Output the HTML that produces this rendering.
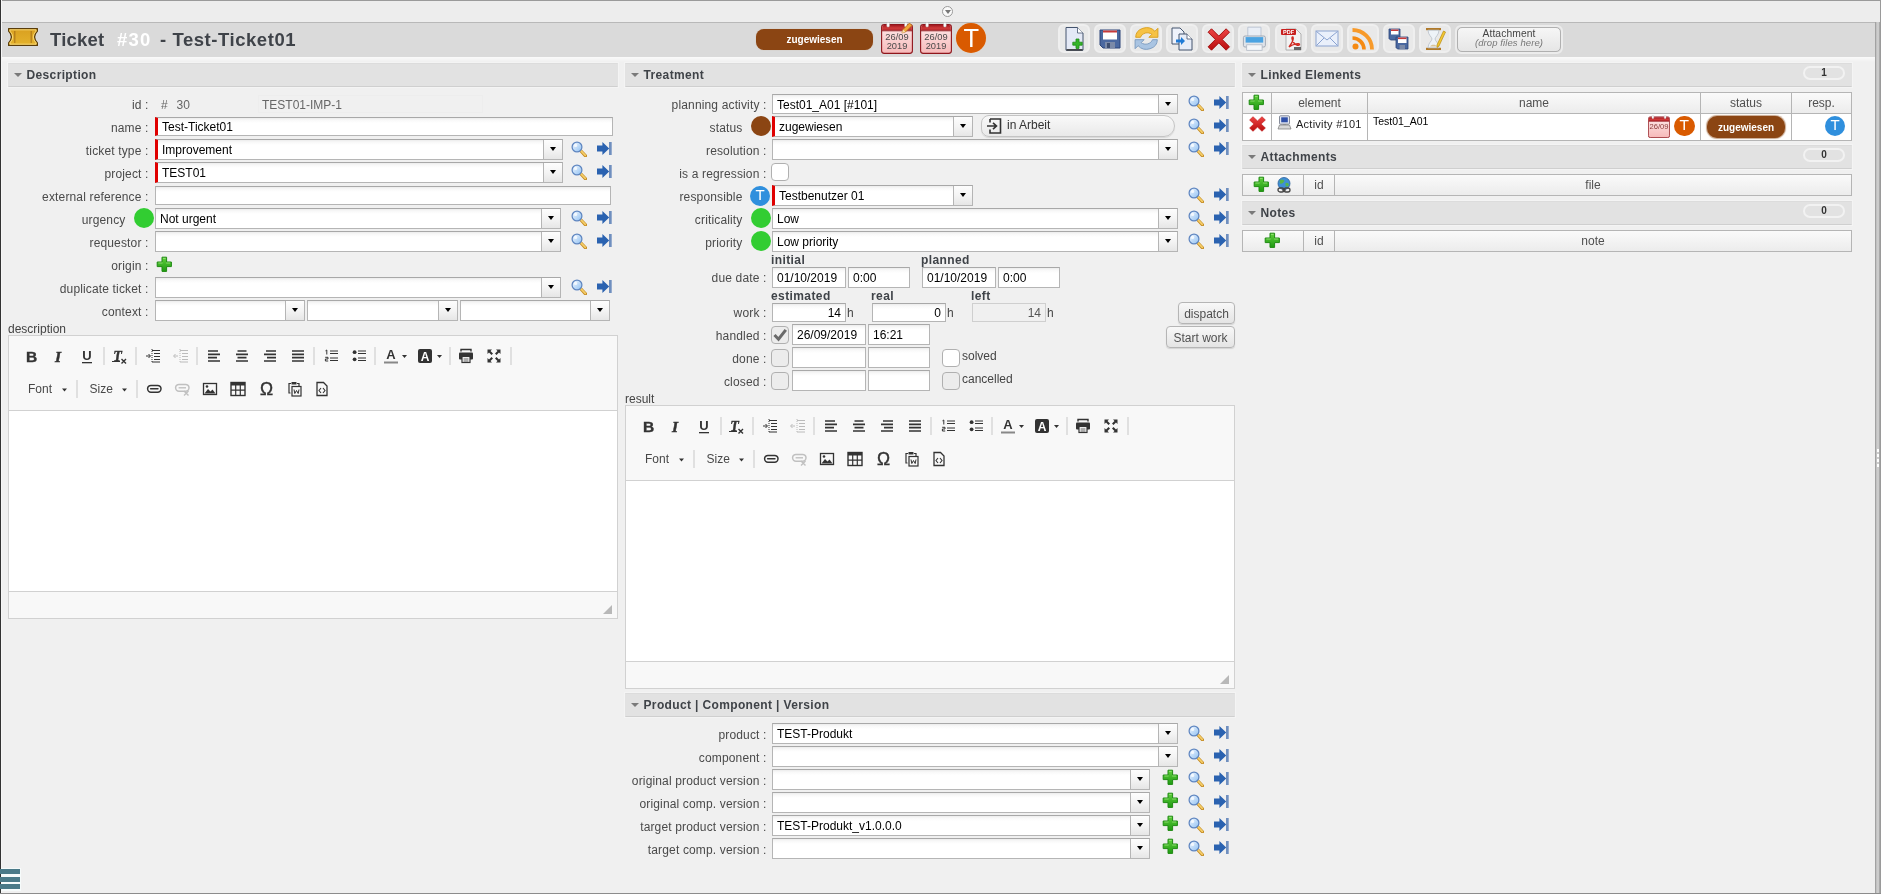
<!DOCTYPE html><html><head><meta charset="utf-8"><title>Ticket #30</title><style>
*{box-sizing:border-box;margin:0;padding:0}
html,body{width:1881px;height:894px;overflow:hidden}
body{will-change:transform;background:#f0f0f0;font-family:"Liberation Sans",sans-serif;font-size:12px;color:#000;position:relative}
.a{position:absolute}
.topline{left:0;top:0;width:1881px;height:1px;background:#9a9a9a}
.topstrip{left:0;top:1px;width:1881px;height:21px;background:#ededed}
.leftline{left:0;top:0;width:1px;height:894px;background:#333;box-shadow:1px 0 0 #f6f6f6}
.botline{left:0;top:893px;width:1881px;height:1px;background:#8c8c8c}
.tbar{left:1px;top:22px;width:1874px;height:35px;background:#dadada;border-top:1px solid #b8b8b8}
.split{left:1875px;top:22px;width:6px;height:871px;background:linear-gradient(90deg,#a2a2a2 0,#a2a2a2 1px,#bcbcbc 1px,#d2d2d2 3px,#c6c6c6 4px,#aaa 4px,#aaa 5px,#969696 5px)}
.rightline{left:1880px;top:0;width:1px;height:894px;background:#9a9a9a}
.sec{height:24px;background:#e2e2e2;border:1px solid #dcdcdc;border-bottom-color:#cfcfcf;border-left-color:#e2e2e2;border-right-color:#e2e2e2;box-shadow:0 0 0 1px #f4f4f4;color:#3f4348;font-weight:bold;font-size:12px;line-height:23px;padding-left:17.5px;letter-spacing:.36px}
.sec:before{content:"";position:absolute;left:4.5px;top:9px;border-left:4px solid transparent;border-right:4px solid transparent;border-top:4.5px solid #7a7a7a}
.lbl{color:#4a4a4a;letter-spacing:.15px;text-align:right;white-space:nowrap;height:16px;line-height:16px}
.in{background:#fff;border:1px solid #b5b5b5;border-top-color:#a8a8a8;background-image:linear-gradient(#ececec 0,#f8f8f8 2px,#fff 5px);white-space:nowrap;overflow:hidden;padding-left:4px;line-height:17px;font-size:12px}
.req{border-left:3px solid #e00000}
.sel{}
.arr{position:absolute;right:0;top:0;bottom:0;width:19px;border-left:1px solid #b5b5b5;background:linear-gradient(#fdfdfd 0,#f4f4f4 50%,#e6e6e6 100%)}
.arr:after{content:"";position:absolute;left:5.5px;top:7.4px;border-left:3.6px solid transparent;border-right:3.6px solid transparent;border-top:4.2px solid #000}
.ro{background:#f0f0f0;background-image:none;border:1px solid #cfcfcf;color:#555}
.dot{border-radius:50%}
.bold{font-weight:bold;color:#3f4348;letter-spacing:.4px}
.cb{width:18px;height:18px;border:1px solid #b0b0b0;border-radius:4px;background:#fff}
.cbg{background:#ececec}
.btn{border:1px solid #b5b5b5;border-radius:4px;background:linear-gradient(#f8f8f8,#e4e4e4);color:#505050;text-align:center;box-shadow:0 1px 1px rgba(0,0,0,.12)}
.th{background:linear-gradient(#fafafa,#ececec);border:1px solid #b5b5b5;color:#505050;text-align:center}
.td{background:#fff;border:1px solid #b5b5b5}
.badge{width:42px;height:14px;border:2px solid #f2f2f2;border-radius:8px;color:#333;font-weight:bold;font-size:10px;line-height:9px;text-align:center}
.ed{background:#f8f8f8;border:1px solid #d1d1d1}
.edc{background:#fff;border-top:1px solid #d1d1d1;border-bottom:1px solid #d1d1d1}
.tbtn{width:32px;height:29px;border-radius:6px;background:#e9e9e9;border:2px solid #efefef}
svg{position:absolute;overflow:visible}
</style></head><body>
<svg width="0" height="0" style="left:0;top:0">
<defs>
<linearGradient id="gLens" x1="0" y1="0" x2="1" y2="1"><stop offset="0" stop-color="#f2f8ff"/><stop offset="1" stop-color="#8fc0f2"/></linearGradient>
<linearGradient id="gGreen" x1="0" y1="0" x2="0" y2="1"><stop offset="0" stop-color="#5fcf3c"/><stop offset="1" stop-color="#1f9a12"/></linearGradient>
<linearGradient id="gRed" x1="0" y1="0" x2="0" y2="1"><stop offset="0" stop-color="#ee4444"/><stop offset="1" stop-color="#b80d0d"/></linearGradient>
<linearGradient id="gCal" x1="0" y1="0" x2="0" y2="1"><stop offset="0" stop-color="#fdeaea"/><stop offset="1" stop-color="#f7b9b9"/></linearGradient>
<linearGradient id="gCalH" x1="0" y1="0" x2="0" y2="1"><stop offset="0" stop-color="#a3181f"/><stop offset=".55" stop-color="#cf3a3a"/><stop offset="1" stop-color="#b3242b"/></linearGradient>
<linearGradient id="gGold" x1="0" y1="0" x2="0" y2="1"><stop offset="0" stop-color="#d9a020"/><stop offset="1" stop-color="#e4b22c"/></linearGradient>
<symbol id="iSearch" viewBox="0 0 16 16"><path d="M9.5 9.5 L14.5 14.8" stroke="#c48a22" stroke-width="3.2" stroke-linecap="round"/><path d="M9.8 9.6 L14.3 14.4" stroke="#f6cf6a" stroke-width="1.6" stroke-linecap="round"/><circle cx="6" cy="6" r="4.9" fill="url(#gLens)" stroke="#5f86c0" stroke-width="1.25"/><circle cx="4.6" cy="4.4" r="1.6" fill="#fff" opacity=".75"/></symbol>
<symbol id="iGoto" viewBox="0 0 15 13"><path d="M0 3.4 H5.4 V0 L12.2 6.5 L5.4 13 V9.6 H0 Z" fill="#2a62b0"/><rect x="12" y="0" width="2.7" height="13" fill="#6f8fbf"/></symbol>
<symbol id="iPlus" viewBox="0 0 16 16"><path d="M6 1.2 H10.6 V6 H15.4 V10.6 H10.6 V15.4 H6 V10.6 H1.2 V6 H6 Z" fill="url(#gGreen)" stroke="#1f8a12" stroke-width="1"/><path d="M7 2.4 H9.6 M2.4 7 H6.5 M10.2 7 H14.2" stroke="#a8ea8a" stroke-width=".9" opacity=".8"/></symbol>
<symbol id="iX" viewBox="0 0 17 16"><path d="M.6 4 L4 .7 L8.5 4.9 L13 .7 L16.4 4 L12.1 8 L16.4 12 L13 15.3 L8.5 11.1 L4 15.3 L.6 12 L4.9 8 Z" fill="url(#gRed)" stroke="#c01818" stroke-width=".6" stroke-linejoin="round"/></symbol>
<symbol id="iCal" viewBox="0 0 32 32"><rect x=".6" y="2.6" width="30.8" height="28.8" rx="2.6" fill="url(#gCal)" stroke="#8f161c" stroke-width="1.1"/><path d="M1.1 8.6 V5.4 Q1.1 3.1 3.4 3.1 H28.6 Q30.9 3.1 30.9 5.4 V8.6 Z" fill="url(#gCalH)"/><path d="M1 8.8 H31" stroke="#8f161c" stroke-width=".9"/><rect x="5.8" y=".5" width="2.6" height="4.4" rx=".8" fill="#fff" stroke="#b9b9b9" stroke-width=".5"/><rect x="23.6" y=".5" width="2.6" height="4.4" rx=".8" fill="#fff" stroke="#b9b9b9" stroke-width=".5"/></symbol>
</defs></svg>
<div class="a topstrip"></div><div class="a topline"></div>
<div class="a tbar"></div><div class="a" style="left:1px;top:57px;width:1874px;height:5px;background:linear-gradient(#fafafa,#f0f0f0)"></div>
<div class="a split"></div><div class="a" style="left:1877px;top:449px;width:2px;height:20px;background:repeating-linear-gradient(#fff 0,#fff 3px,transparent 3px,transparent 5px)"></div>
<div class="a rightline"></div><div class="a leftline"></div><div class="a botline"></div>
<div class="a" style="left:1px;top:868px;width:20px;height:23px;background:#f6fbfb"></div>
<div class="a" style="left:0;top:869px;width:20px;height:5px;background:#4b7a88"></div>
<div class="a" style="left:0;top:877px;width:20px;height:5px;background:#4b7a88"></div>
<div class="a" style="left:0;top:884px;width:20px;height:5px;background:#4b7a88"></div>
<div class="a dot" style="left:942px;top:5.5px;width:11px;height:11px;border:1px solid #9a9a9a;background:#fafafa"></div><div class="a" style="left:944.5px;top:9.5px;border-left:3px solid transparent;border-right:3px solid transparent;border-top:4px solid #777"></div>
<svg class="a" style="left:8px;top:28px" width="30" height="18" viewBox="0 0 30 18"><path d="M.6 .6 H29.4 V3.2 Q23.8 9 29.4 14.8 V17.4 H.6 V14.8 Q6.2 9 .6 3.2 Z" fill="url(#gGold)" stroke="#5a3d0a" stroke-width="1.2" stroke-linejoin="round"/><path d="M1.8 1.8 H28 V3.2 Q22.6 9 28 14.8 V16.2 H2 V14.8 Q7.4 9 2 3.2 Z" fill="none" stroke="#ffe28a" stroke-width=".9" opacity=".9"/><path d="M6.8 3.4 V15 M23.2 3.4 V15" stroke="#7a4208" stroke-width="1.1" stroke-dasharray="1 1"/></svg>
<div class="a" style="left:50px;top:29px;font-size:18.5px;letter-spacing:.2px;font-weight:bold;color:#3f4349;line-height:22px;white-space:nowrap">Ticket</div>
<div class="a" style="left:117px;top:29px;font-size:18.5px;letter-spacing:1.2px;font-weight:bold;color:#fff;line-height:22px;white-space:nowrap">#30</div>
<div class="a" style="left:160px;top:29px;font-size:18.5px;font-weight:bold;color:#3f4349;line-height:22px;white-space:nowrap;letter-spacing:.55px">- Test-Ticket01</div>
<div class="a" style="left:756px;top:29px;width:117px;height:21px;border-radius:8px;background:#8b4513;color:#fff;font-weight:bold;font-size:10px;line-height:21px;text-align:center;box-shadow:0 0 1px #c9a88f">zugewiesen</div>
<svg class="a" style="left:881px;top:22px" width="32" height="32"><use href="#iCal"/></svg>
<div class="a" style="left:881px;top:32.5px;width:32px;text-align:center;font-size:9.3px;line-height:9.6px;color:#4a4a4a">26/09<br>2019</div>
<svg class="a" style="left:901px;top:22px" width="12" height="12" viewBox="0 0 12 12"><path d="M1 11 L2 7.5 L8.5 1 L11 3.5 L4.5 10 Z" fill="#f0a63a" stroke="#b36b12" stroke-width=".7"/><path d="M1 11 L2 7.5 L4.5 10 Z" fill="#f5deb3"/></svg>
<svg class="a" style="left:920px;top:22px" width="32" height="32"><use href="#iCal"/></svg>
<div class="a" style="left:920px;top:32.5px;width:32px;text-align:center;font-size:9.3px;line-height:9.6px;color:#4a4a4a">26/09<br>2019</div>
<div class="a dot" style="left:956px;top:22.5px;width:30.4px;height:30.4px;background:#d95a00;color:#fff;font-size:25.5px;line-height:31px;box-shadow:0 0 1px #f0c8a0;text-align:center">T</div>
<div class="a tbtn" style="left:1058px;top:24px"></div>
<div class="a tbtn" style="left:1094px;top:24px"></div>
<div class="a tbtn" style="left:1130px;top:24px"></div>
<div class="a tbtn" style="left:1166px;top:24px"></div>
<div class="a tbtn" style="left:1202px;top:24px"></div>
<div class="a tbtn" style="left:1238px;top:24px"></div>
<div class="a tbtn" style="left:1275px;top:24px"></div>
<div class="a tbtn" style="left:1311px;top:24px"></div>
<div class="a tbtn" style="left:1347px;top:24px"></div>
<div class="a tbtn" style="left:1383px;top:24px"></div>
<div class="a tbtn" style="left:1419px;top:24px"></div>
<svg class="a" style="left:1062px;top:27px" width="24" height="24" viewBox="0 0 24 24"><g transform="translate(12 12) scale(1.0) translate(-12 -12)"><path d="M4 .5 H15.5 L21 6 V23.2 H4 Z" fill="#e4e9f6" stroke="#44546e" stroke-width="1"/><path d="M15.5 .5 V6 H21" fill="#fff" stroke="#44546e" stroke-width=".8"/><path d="M4.5 22.9 H20.6" stroke="#222" stroke-width="1.3"/><path d="M14 12 H17 V15.2 H20.2 V18.2 H17 V21.4 H14 V18.2 H10.8 V15.2 H14 Z" fill="#35b52a" stroke="#1f8a18" stroke-width=".8"/></g></svg>
<svg class="a" style="left:1098px;top:27px" width="24" height="24" viewBox="0 0 24 24"><g transform="translate(12 12) scale(1.0) translate(-12 -12)"><path d="M2 3 H22 V21 H5 L2 18 Z" fill="#4a68a0" stroke="#2c4478" stroke-width="1"/><rect x="5" y="3.5" width="14" height="9" fill="#fff"/><rect x="5" y="3.5" width="14" height="2" fill="#c73a3a"/><rect x="7" y="15" width="10" height="6" fill="#7b8aa8"/><rect x="9" y="16" width="3" height="5" fill="#3c4d70"/></g></svg>
<svg class="a" style="left:1134px;top:27px" width="24" height="24" viewBox="0 0 24 24"><g transform="translate(12.5 11.5) scale(1.2) translate(-12 -12)"><path d="M3 11 A9 8 0 0 1 19 6 L21.5 3.5 V11 H14 L16.5 8.5 A6 5.5 0 0 0 7 11 Z" fill="#f6c244" stroke="#d9a020" stroke-width=".8"/><path d="M21 13 A9 8 0 0 1 5 18 L2.5 20.5 V13 H10 L7.5 15.5 A6 5.5 0 0 0 17 13 Z" fill="#a9c4e2" stroke="#7c9cc0" stroke-width=".8"/></g></svg>
<svg class="a" style="left:1170px;top:27px" width="24" height="24" viewBox="0 0 24 24"><g transform="translate(12 12) scale(1.0) translate(-12 -12)"><path d="M2 1 H10 L14 5 V17 H2 Z" fill="#eef2fb" stroke="#44546e" stroke-width="1"/><path d="M9 7 H17 L22 12 V23 H9 Z" fill="#e6ecf8" stroke="#44546e" stroke-width="1"/><path d="M17 7 V12 H22" fill="#fff" stroke="#44546e" stroke-width=".8"/><path d="M6 12.5 H11 V10 L15 14 L11 18 V15.5 H6 Z" fill="#1f7ad6"/></g></svg>
<svg class="a" style="left:1206px;top:27px" width="24" height="24" viewBox="0 0 24 24"><g transform="translate(12.8 12.5) scale(1.14) translate(-12 -12)"><path d="M2.6 5.6 L5.6 2.6 L12 9 L18.4 2.6 L21.4 5.6 L15 12 L21.4 18.4 L18.4 21.4 L12 15 L5.6 21.4 L2.6 18.4 L9 12 Z" fill="url(#gRed)" stroke="#9e0a0a" stroke-width=".8" stroke-linejoin="round"/></g></svg>
<svg class="a" style="left:1242px;top:27px" width="24" height="24" viewBox="0 0 24 24"><g transform="translate(12.4 12.3) scale(1.1) translate(-12 -12)"><path d="M6 1 H18 V10 H6 Z" fill="#e9eef6" stroke="#b8c2d2" stroke-width=".8"/><rect x="2" y="9" width="20" height="10" rx="1.5" fill="#dfe4ea" stroke="#9aa3b0" stroke-width=".8"/><rect x="4" y="10" width="16" height="5" fill="#4ba3e2"/><rect x="5" y="17" width="14" height="5" fill="#f4f6f9" stroke="#b0b8c4" stroke-width=".7"/></g></svg>
<svg class="a" style="left:1279px;top:27px" width="24" height="24" viewBox="0 0 24 24"><g transform="translate(12 12) scale(1.0) translate(-12 -12)"><path d="M7 2 H17 L22 7 V23 H7 Z" fill="#f2f2f2" stroke="#a8a8a8" stroke-width=".9"/><rect x="2" y="2" width="15" height="6" rx="1" fill="#c8201e"/><text x="9.5" y="7" font-size="5.5" font-weight="bold" fill="#fff" text-anchor="middle" font-family="Liberation Sans">PDF</text><path d="M10 20 C13 16 15 12 14 10 C12.5 9 12.5 13 15 16 C17 18.5 20 19 20.5 17.5 C20.5 16 15 16.5 10 20 Z" fill="none" stroke="#d12a22" stroke-width="1.4"/><rect x="15" y="20" width="7" height="3" fill="#666"/></g></svg>
<svg class="a" style="left:1315px;top:27px" width="24" height="24" viewBox="0 0 24 24"><g transform="translate(12 12) scale(1.0) translate(-12 -12)"><rect x="1" y="4" width="22" height="15" fill="#eaf0fb" stroke="#8ba3d0" stroke-width="1"/><path d="M1.5 4.5 L12 13 L22.5 4.5 M1.5 18.5 L9 11 M22.5 18.5 L15 11" fill="none" stroke="#8ba3d0" stroke-width="1"/></g></svg>
<svg class="a" style="left:1351px;top:27px" width="24" height="24" viewBox="0 0 24 24"><g transform="translate(12 12) scale(1.0) translate(-12 -12)"><circle cx="4.5" cy="19.5" r="3" fill="#f58a12"/><path d="M1.5 11 A11.5 11.5 0 0 1 13 22.5" fill="none" stroke="#f58a12" stroke-width="3.6"/><path d="M1.5 3 A19.5 19.5 0 0 1 21 22.5" fill="none" stroke="#f79a2a" stroke-width="3.8"/></g></svg>
<svg class="a" style="left:1387px;top:27px" width="24" height="24" viewBox="0 0 24 24"><g transform="translate(12 12) scale(1.0) translate(-12 -12)"><g><path d="M2 2 H13 V13 H3.5 L2 11.5 Z" fill="#4a68a0" stroke="#2c4478" stroke-width=".8"/><rect x="4" y="2.5" width="7.5" height="5" fill="#fff"/><rect x="4" y="2.5" width="7.5" height="1.5" fill="#c73a3a"/></g><g transform="translate(7,8)"><path d="M2 2 H14 V14 H3.5 L2 12.5 Z" fill="#4a68a0" stroke="#2c4478" stroke-width=".8"/><rect x="4" y="2.5" width="8.5" height="5.5" fill="#fff"/><rect x="4" y="2.5" width="8.5" height="1.6" fill="#c73a3a"/><rect x="5.5" y="10" width="5.5" height="4" fill="#7b8aa8"/></g></g></svg>
<svg class="a" style="left:1423px;top:27px" width="24" height="24" viewBox="0 0 24 24"><g transform="translate(12 12) scale(1.0) translate(-12 -12)"><rect x="3" y="1" width="15" height="2.2" fill="#b07a2a"/><rect x="3" y="20.8" width="15" height="2.2" fill="#b07a2a"/><path d="M5 3.2 H16 C16 8 12 10 12 12 C12 14 16 16 16 20.8 H5 C5 16 9 14 9 12 C9 10 5 8 5 3.2 Z" fill="#eef3f8" stroke="#b8bfc8" stroke-width=".8"/><path d="M7 19.5 C8 17 13 17 14 19.5 Z" fill="#d8c49a"/><path d="M14 18 L20.5 4 L22.5 5 L16 19 L14 20.5 Z" fill="#f3c832" stroke="#b88a10" stroke-width=".7"/></g></svg>
<div class="a" style="left:1455px;top:25px;width:108px;height:29px;border-radius:6px;border:2px solid #ececec"></div>
<div class="a" style="left:1457px;top:27px;width:104px;height:25px;border-radius:5px;border:1px solid #b0b0b0;background:linear-gradient(#f6f6f6,#e6e6e6);text-align:center;font-size:10.3px;line-height:8.9px;color:#444;padding-top:2.4px;letter-spacing:.1px">Attachment<br><i style="color:#777;font-size:9.5px">(drop files here)</i></div>
<div class="a sec" style="left:8px;top:63px;width:610px">Description</div>
<div class="a lbl" style="left:-51.5px;top:97px;width:200px">id :</div>
<div class="a" style="left:161px;top:97px;line-height:16px;color:#666">#</div><div class="a" style="left:176.5px;top:97px;line-height:16px;color:#666">30</div>
<div class="a" style="left:258px;top:95px;width:225px;height:18px;border:1px solid #ededed;color:#666;line-height:18px;padding-left:3px">TEST01-IMP-1</div>
<div class="a lbl" style="left:-51.5px;top:120px;width:200px">name :</div>
<div class="a in req" style="left:155px;top:117px;width:458px;height:19px;line-height:19px">Test-Ticket01</div>
<div class="a lbl" style="left:-51.5px;top:143px;width:200px">ticket type :</div>
<div class="a in req" style="left:155px;top:139px;width:408px;height:21px;line-height:21px">Improvement<span class="arr" style="width:19px"></span></div>
<svg class="a" style="left:571px;top:141px" width="16" height="16"><use href="#iSearch"/></svg>
<svg class="a" style="left:597px;top:142px" width="15" height="13"><use href="#iGoto"/></svg>
<div class="a lbl" style="left:-51.5px;top:166px;width:200px">project :</div>
<div class="a in req" style="left:155px;top:162px;width:408px;height:21px;line-height:21px">TEST01<span class="arr" style="width:19px"></span></div>
<svg class="a" style="left:571px;top:164px" width="16" height="16"><use href="#iSearch"/></svg>
<svg class="a" style="left:597px;top:165px" width="15" height="13"><use href="#iGoto"/></svg>
<div class="a lbl" style="left:-51.5px;top:189px;width:200px">external reference :</div>
<div class="a in" style="left:155px;top:186px;width:456px;height:19px;line-height:19px"></div>
<div class="a lbl" style="left:-74.5px;top:212px;width:200px">urgency</div>
<div class="a dot" style="left:134px;top:208px;width:20px;height:20px;background:#32cd32"></div>
<div class="a in" style="left:155px;top:208px;width:406px;height:21px;line-height:21px">Not urgent<span class="arr" style="width:19px"></span></div>
<svg class="a" style="left:571px;top:210px" width="16" height="16"><use href="#iSearch"/></svg>
<svg class="a" style="left:597px;top:211px" width="15" height="13"><use href="#iGoto"/></svg>
<div class="a lbl" style="left:-51.5px;top:235px;width:200px">requestor :</div>
<div class="a in" style="left:155px;top:231px;width:406px;height:21px;line-height:21px"><span class="arr" style="width:19px"></span></div>
<svg class="a" style="left:571px;top:233px" width="16" height="16"><use href="#iSearch"/></svg>
<svg class="a" style="left:597px;top:234px" width="15" height="13"><use href="#iGoto"/></svg>
<div class="a lbl" style="left:-51.5px;top:258px;width:200px">origin :</div>
<svg class="a" style="left:156px;top:256px" width="16" height="16"><use href="#iPlus"/></svg>
<div class="a lbl" style="left:-51.5px;top:281px;width:200px">duplicate ticket :</div>
<div class="a in" style="left:155px;top:277px;width:406px;height:21px;line-height:21px"><span class="arr" style="width:19px"></span></div>
<svg class="a" style="left:571px;top:279px" width="16" height="16"><use href="#iSearch"/></svg>
<svg class="a" style="left:597px;top:280px" width="15" height="13"><use href="#iGoto"/></svg>
<div class="a lbl" style="left:-51.5px;top:304px;width:200px">context :</div>
<div class="a in" style="left:155px;top:300px;width:150px;height:21px;line-height:21px"><span class="arr" style="width:19px"></span></div>
<div class="a in" style="left:307px;top:300px;width:151px;height:21px;line-height:21px"><span class="arr" style="width:19px"></span></div>
<div class="a in" style="left:460px;top:300px;width:150px;height:21px;line-height:21px"><span class="arr" style="width:19px"></span></div>
<div class="a" style="left:8px;top:321px;line-height:16px;color:#444">description</div>
<div class="a ed" style="left:8px;top:335px;width:610px;height:284px"></div>
<div class="a edc" style="left:9px;top:410px;width:608px;height:182px"></div>
<svg class="a" style="left:0;top:0" width="1881" height="894"><text x="31.5" y="361.6" font-size="15.5" font-weight="bold" text-anchor="middle" fill="#333" stroke="#333" stroke-width=".4" font-family="Liberation Sans">B</text><text x="58" y="361.6" font-size="15.5" font-style="italic" font-weight="bold" text-anchor="middle" fill="#333" stroke="#333" stroke-width=".5" font-family="Liberation Serif">I</text><text x="87" y="360" font-size="13" font-weight="bold" text-anchor="middle" fill="#333" font-family="Liberation Sans">U</text><rect x="82" y="362" width="10" height="1.3" fill="#333"/><text x="117.5" y="360.5" font-size="14" font-style="italic" font-weight="bold" text-anchor="middle" fill="#333" font-family="Liberation Serif" stroke="#333" stroke-width=".4">T</text><rect x="112" y="361" width="8" height="1" fill="#333"/><path d="M121.5 359 l4.5 4.5 m0 -4.5 l-4.5 4.5" stroke="#333" stroke-width="1.4"/><rect x="103.5" y="347" width="1" height="18" fill="#c8c8c8"/><rect x="135.5" y="347" width="1" height="18" fill="#c8c8c8"/><rect x="196.5" y="347" width="1" height="18" fill="#c8c8c8"/><rect x="313.5" y="347" width="1" height="18" fill="#c8c8c8"/><rect x="374.5" y="347" width="1" height="18" fill="#c8c8c8"/><rect x="449.5" y="347" width="1" height="18" fill="#c8c8c8"/><rect x="510.5" y="347" width="1" height="18" fill="#c8c8c8"/><g transform="translate(145,348)" opacity="1"><path d="M7 2.5 H15 M9 5.5 H15 M9 8.5 H15 M9 11.5 H15 M7 14 H15" stroke="#333" stroke-width="1"/><path d="M7 1 V15" stroke="#333" stroke-width="1" stroke-dasharray="1 1"/><path d="M1 8 H5 M3.5 6 L5.5 8 L3.5 10" stroke="#333" stroke-width="1" fill="none"/></g><g transform="translate(173,348)" opacity="0.3"><path d="M7 2.5 H15 M9 5.5 H15 M9 8.5 H15 M9 11.5 H15 M7 14 H15" stroke="#333" stroke-width="1"/><path d="M7 1 V15" stroke="#333" stroke-width="1" stroke-dasharray="1 1"/><path d="M1 8 H5 M2.5 6 L.5 8 L2.5 10" stroke="#333" stroke-width="1" fill="none"/></g><g transform="translate(206,348)" opacity="1"><path d="M2 3 H12 M2 6.3 H14 M2 9.6 H11 M2 13 H14" stroke="#333" stroke-width="1.7"/></g><g transform="translate(234,348)" opacity="1"><path d="M3.5 3 H12.5 M2 6.3 H14 M3.5 9.6 H12.5 M2 13 H14" stroke="#333" stroke-width="1.7"/></g><g transform="translate(262,348)" opacity="1"><path d="M4 3 H14 M2 6.3 H14 M5 9.6 H14 M2 13 H14" stroke="#333" stroke-width="1.7"/></g><g transform="translate(290,348)" opacity="1"><path d="M2 3 H14 M2 6.3 H14 M2 9.6 H14 M2 13 H14" stroke="#333" stroke-width="1.7"/></g><g transform="translate(324,348)" opacity="1"><path d="M6 3 H14 M6 5.5 H14 M6 10 H14 M6 12.5 H14" stroke="#333" stroke-width="1"/><path d="M1.5 2.8 L2.8 2 V6.5 M1.2 9.3 H4 V11 H1.4 V13 H4.2" fill="none" stroke="#333" stroke-width="1"/></g><g transform="translate(352,348)" opacity="1"><path d="M6 3 H14 M6 5.5 H14 M6 10 H14 M6 12.5 H14" stroke="#333" stroke-width="1"/><circle cx="2.6" cy="4.2" r="1.9" fill="#333"/><circle cx="2.6" cy="11.3" r="1.9" fill="#333"/></g><text x="391" y="359" font-size="13" font-weight="bold" text-anchor="middle" fill="#333" font-family="Liberation Sans">A</text><rect x="384" y="361.5" width="14" height="2" fill="#888"/><path d="M402 355 h5 l-2.5 3 z" fill="#333"/><rect x="418" y="349" width="14" height="14" rx="2" fill="#333"/><text x="425" y="360.5" font-size="12" font-weight="bold" text-anchor="middle" fill="#fff" font-family="Liberation Sans">A</text><path d="M437 355 h5 l-2.5 3 z" fill="#333"/><g transform="translate(458,348)" opacity="1"><path d="M3 3.5 V1.5 H13 V3.5" fill="none" stroke="#333" stroke-width="1.4"/><rect x="1" y="4.5" width="14" height="7" rx="1" fill="#333"/><rect x="4" y="8.5" width="8" height="6" fill="#fff" stroke="#333" stroke-width="1.2"/><path d="M5.5 11 H10.5 M5.5 13 H10.5" stroke="#333" stroke-width=".8"/></g><g transform="translate(486,348)" opacity="1"><path d="M1.5 1.5 H6 L4.5 3 L7 5.5 L5.5 7 L3 4.5 L1.5 6 Z M14.5 1.5 V6 L13 4.5 L10.5 7 L9 5.5 L11.5 3 L10 1.5 Z M1.5 14.5 V10 L3 11.5 L5.5 9 L7 10.5 L4.5 13 L6 14.5 Z M14.5 14.5 H10 L11.5 13 L9 10.5 L10.5 9 L13 11.5 L14.5 10 Z" fill="#333"/></g><text x="28" y="393.2" font-size="12" fill="#484848" font-family="Liberation Sans">Font</text><path d="M62 388.5 h5 l-2.5 3 z" fill="#333"/><text x="89.5" y="393.2" font-size="12" fill="#484848" font-family="Liberation Sans">Size</text><path d="M122 388.5 h5 l-2.5 3 z" fill="#333"/><rect x="76.5" y="380" width="1" height="18" fill="#c8c8c8"/><rect x="136.5" y="380" width="1" height="18" fill="#c8c8c8"/><g transform="translate(146,381)" opacity="1"><rect x="1.6" y="4.4" width="13.4" height="6.8" rx="3.4" fill="none" stroke="#333" stroke-width="1.5"/><path d="M4.6 7.8 H12" stroke="#333" stroke-width="1.4" stroke-linecap="round"/></g><g transform="translate(174,381)" opacity="0.28"><rect x="1.6" y="3.4" width="13.4" height="6.8" rx="3.4" fill="none" stroke="#333" stroke-width="1.5"/><path d="M4.6 6.8 H12" stroke="#333" stroke-width="1.4"/><path d="M10 10 l4.5 4.5 m0 -4.5 l-4.5 4.5" stroke="#333" stroke-width="1.4"/></g><g transform="translate(202,381)" opacity="1"><rect x="1.5" y="2.5" width="13" height="11" fill="none" stroke="#333" stroke-width="1.3"/><path d="M2.5 12.5 L6 8 L8.5 10.5 L10.5 8.5 L13.5 12.5 Z" fill="#333"/><circle cx="5" cy="5.5" r="1.3" fill="#333"/></g><g transform="translate(230,381)" opacity="1"><rect x="1" y="1.5" width="14" height="13" fill="none" stroke="#333" stroke-width="1.4"/><rect x="1" y="1.5" width="14" height="3" fill="#333"/><path d="M1 9.2 H15 M5.7 4 V14.5 M10.3 4 V14.5" stroke="#333" stroke-width="1.2"/></g><text x="266.5" y="395" font-size="17.5" text-anchor="middle" fill="#333" stroke="#333" stroke-width=".45" font-family="Liberation Sans">Ω</text><g transform="translate(287,381)" opacity="1"><path d="M3.5 12 H2 V2.5 H4 M10 2.5 H12 V5" fill="none" stroke="#333" stroke-width="1.2"/><rect x="4.5" y="1" width="5" height="2.6" rx=".6" fill="#333"/><rect x="5" y="5.5" width="9" height="9.5" fill="none" stroke="#333" stroke-width="1.2"/><path d="M7 8.5 L7.8 12.5 L9.5 9.5 L11.2 12.5 L12 8.5" fill="none" stroke="#333" stroke-width="1"/></g><g transform="translate(314,381)" opacity="1"><path d="M3 1.5 H9.5 L13 5 V14.5 H3 Z" fill="none" stroke="#333" stroke-width="1.3"/><path d="M7 7 L5 9.5 L7 12 M9 7 L11 9.5 L9 12" fill="none" stroke="#333" stroke-width="1.1"/></g><path d="M612 605 v9 h-9 z" fill="#b8b8b8"/></svg>
<div class="a sec" style="left:625px;top:63px;width:610px">Treatment</div>
<div class="a lbl" style="left:566.5px;top:97px;width:200px">planning activity :</div>
<div class="a in" style="left:772px;top:94px;width:406px;height:20px;line-height:20px">Test01_A01 [#101]<span class="arr" style="width:19px"></span></div>
<svg class="a" style="left:1188px;top:95px" width="16" height="16"><use href="#iSearch"/></svg>
<svg class="a" style="left:1214px;top:96px" width="15" height="13"><use href="#iGoto"/></svg>
<div class="a lbl" style="left:542.5px;top:120px;width:200px">status</div>
<div class="a dot" style="left:751px;top:116px;width:20px;height:20px;background:#8b4513"></div>
<div class="a in req" style="left:772px;top:116px;width:201px;height:21px;line-height:21px">zugewiesen<span class="arr" style="width:19px"></span></div>
<svg class="a" style="left:1188px;top:118px" width="16" height="16"><use href="#iSearch"/></svg>
<svg class="a" style="left:1214px;top:119px" width="15" height="13"><use href="#iGoto"/></svg>
<div class="a" style="left:981px;top:115px;width:194px;height:22px;border:1px solid #c4c4c4;border-radius:8px 11px 11px 8px;background:linear-gradient(#f9f9f9,#e9e9e9);box-shadow:0 1px 1px rgba(0,0,0,.1)"></div>
<svg class="a" style="left:986px;top:118px" width="16" height="16" viewBox="0 0 16 16"><path d="M4 1 H14.5 V15 H4 V11.5 M4 4.5 V1" fill="none" stroke="#333" stroke-width="1.6"/><path d="M1 8 H10 M7 4.8 L10.5 8 L7 11.2" fill="none" stroke="#333" stroke-width="1.6"/></svg>
<div class="a" style="left:1007px;top:117px;line-height:16px;color:#333">in Arbeit</div>
<div class="a lbl" style="left:566.5px;top:143px;width:200px">resolution :</div>
<div class="a in" style="left:772px;top:139px;width:406px;height:21px;line-height:21px"><span class="arr" style="width:19px"></span></div>
<svg class="a" style="left:1188px;top:141px" width="16" height="16"><use href="#iSearch"/></svg>
<svg class="a" style="left:1214px;top:142px" width="15" height="13"><use href="#iGoto"/></svg>
<div class="a lbl" style="left:566.5px;top:166px;width:200px">is a regression :</div>
<div class="a cb" style="left:771px;top:163px"></div>
<div class="a lbl" style="left:542.5px;top:189px;width:200px">responsible</div>
<div class="a dot" style="left:750px;top:186px;width:20px;height:20px;background:#2f8fdd;color:#fff;font-size:15px;line-height:18.6px;text-align:center">T</div>
<div class="a in req" style="left:772px;top:185px;width:201px;height:21px;line-height:21px">Testbenutzer 01<span class="arr" style="width:19px"></span></div>
<svg class="a" style="left:1188px;top:187px" width="16" height="16"><use href="#iSearch"/></svg>
<svg class="a" style="left:1214px;top:188px" width="15" height="13"><use href="#iGoto"/></svg>
<div class="a lbl" style="left:542.5px;top:212px;width:200px">criticality</div>
<div class="a dot" style="left:751px;top:208px;width:20px;height:20px;background:#32cd32"></div>
<div class="a in" style="left:772px;top:208px;width:406px;height:21px;line-height:21px">Low<span class="arr" style="width:19px"></span></div>
<svg class="a" style="left:1188px;top:210px" width="16" height="16"><use href="#iSearch"/></svg>
<svg class="a" style="left:1214px;top:211px" width="15" height="13"><use href="#iGoto"/></svg>
<div class="a lbl" style="left:542.5px;top:235px;width:200px">priority</div>
<div class="a dot" style="left:751px;top:231px;width:20px;height:20px;background:#32cd32"></div>
<div class="a in" style="left:772px;top:231px;width:406px;height:21px;line-height:21px">Low priority<span class="arr" style="width:19px"></span></div>
<svg class="a" style="left:1188px;top:233px" width="16" height="16"><use href="#iSearch"/></svg>
<svg class="a" style="left:1214px;top:234px" width="15" height="13"><use href="#iGoto"/></svg>
<div class="a bold" style="left:771px;top:252px;line-height:16px">initial</div>
<div class="a bold" style="left:921px;top:252px;line-height:16px">planned</div>
<div class="a lbl" style="left:566.5px;top:270px;width:200px">due date :</div>
<div class="a in" style="left:772px;top:267px;width:74px;height:21px;line-height:21px">01/10/2019</div>
<div class="a in" style="left:848px;top:267px;width:62px;height:21px;line-height:21px">0:00</div>
<div class="a in" style="left:922px;top:267px;width:74px;height:21px;line-height:21px">01/10/2019</div>
<div class="a in" style="left:998px;top:267px;width:62px;height:21px;line-height:21px">0:00</div>
<div class="a bold" style="left:771px;top:288px;line-height:16px">estimated</div>
<div class="a bold" style="left:871px;top:288px;line-height:16px">real</div>
<div class="a bold" style="left:971px;top:288px;line-height:16px">left</div>
<div class="a lbl" style="left:566.5px;top:305px;width:200px">work :</div>
<div class="a in" style="left:772px;top:303px;width:74px;height:19px;line-height:19px;text-align:right;padding-right:4px">14</div>
<div class="a in" style="left:872px;top:303px;width:74px;height:19px;line-height:19px;text-align:right;padding-right:4px">0</div>
<div class="a in ro" style="left:972px;top:303px;width:74px;height:19px;line-height:19px;text-align:right;padding-right:4px">14</div>
<div class="a" style="left:847px;top:305px;line-height:16px;color:#444">h</div>
<div class="a" style="left:947px;top:305px;line-height:16px;color:#444">h</div>
<div class="a" style="left:1047px;top:305px;line-height:16px;color:#444">h</div>
<div class="a btn" style="left:1178px;top:302px;width:57px;height:22px;line-height:23px">dispatch</div>
<div class="a lbl" style="left:566.5px;top:328px;width:200px">handled :</div>
<div class="a cb cbg" style="left:771px;top:326px"></div><svg class="a" style="left:773px;top:328px" width="14" height="14" viewBox="0 0 14 14"><path d="M1.5 7 L5.5 11.2 L12.8 1.8" fill="none" stroke="#6a6a6a" stroke-width="3"/></svg>
<div class="a in" style="left:792px;top:324px;width:74px;height:21px;line-height:21px">26/09/2019</div>
<div class="a in" style="left:868px;top:324px;width:62px;height:21px;line-height:21px">16:21</div>
<div class="a btn" style="left:1166px;top:326px;width:69px;height:22px;line-height:23px">Start work</div>
<div class="a lbl" style="left:566.5px;top:351px;width:200px">done :</div>
<div class="a cb cbg" style="left:771px;top:349px"></div>
<div class="a in" style="left:792px;top:347px;width:74px;height:21px;line-height:21px"></div>
<div class="a in" style="left:868px;top:347px;width:62px;height:21px;line-height:21px"></div>
<div class="a cb" style="left:942px;top:349px"></div><div class="a" style="left:962px;top:348px;line-height:16px;color:#444">solved</div>
<div class="a lbl" style="left:566.5px;top:374px;width:200px">closed :</div>
<div class="a cb cbg" style="left:771px;top:372px"></div>
<div class="a in" style="left:792px;top:370px;width:74px;height:21px;line-height:21px"></div>
<div class="a in" style="left:868px;top:370px;width:62px;height:21px;line-height:21px"></div>
<div class="a cb cbg" style="left:942px;top:372px"></div><div class="a" style="left:962px;top:371px;line-height:16px;color:#444">cancelled</div>
<div class="a" style="left:625px;top:391px;line-height:16px;color:#444">result</div>
<div class="a ed" style="left:625px;top:405px;width:610px;height:284px"></div>
<div class="a edc" style="left:626px;top:480px;width:608px;height:182px"></div>
<svg class="a" style="left:0;top:0" width="1881" height="894"><text x="648.5" y="431.6" font-size="15.5" font-weight="bold" text-anchor="middle" fill="#333" stroke="#333" stroke-width=".4" font-family="Liberation Sans">B</text><text x="675" y="431.6" font-size="15.5" font-style="italic" font-weight="bold" text-anchor="middle" fill="#333" stroke="#333" stroke-width=".5" font-family="Liberation Serif">I</text><text x="704" y="430" font-size="13" font-weight="bold" text-anchor="middle" fill="#333" font-family="Liberation Sans">U</text><rect x="699" y="432" width="10" height="1.3" fill="#333"/><text x="734.5" y="430.5" font-size="14" font-style="italic" font-weight="bold" text-anchor="middle" fill="#333" font-family="Liberation Serif" stroke="#333" stroke-width=".4">T</text><rect x="729" y="431" width="8" height="1" fill="#333"/><path d="M738.5 429 l4.5 4.5 m0 -4.5 l-4.5 4.5" stroke="#333" stroke-width="1.4"/><rect x="720.5" y="417" width="1" height="18" fill="#c8c8c8"/><rect x="752.5" y="417" width="1" height="18" fill="#c8c8c8"/><rect x="813.5" y="417" width="1" height="18" fill="#c8c8c8"/><rect x="930.5" y="417" width="1" height="18" fill="#c8c8c8"/><rect x="991.5" y="417" width="1" height="18" fill="#c8c8c8"/><rect x="1066.5" y="417" width="1" height="18" fill="#c8c8c8"/><rect x="1127.5" y="417" width="1" height="18" fill="#c8c8c8"/><g transform="translate(762,418)" opacity="1"><path d="M7 2.5 H15 M9 5.5 H15 M9 8.5 H15 M9 11.5 H15 M7 14 H15" stroke="#333" stroke-width="1"/><path d="M7 1 V15" stroke="#333" stroke-width="1" stroke-dasharray="1 1"/><path d="M1 8 H5 M3.5 6 L5.5 8 L3.5 10" stroke="#333" stroke-width="1" fill="none"/></g><g transform="translate(790,418)" opacity="0.3"><path d="M7 2.5 H15 M9 5.5 H15 M9 8.5 H15 M9 11.5 H15 M7 14 H15" stroke="#333" stroke-width="1"/><path d="M7 1 V15" stroke="#333" stroke-width="1" stroke-dasharray="1 1"/><path d="M1 8 H5 M2.5 6 L.5 8 L2.5 10" stroke="#333" stroke-width="1" fill="none"/></g><g transform="translate(823,418)" opacity="1"><path d="M2 3 H12 M2 6.3 H14 M2 9.6 H11 M2 13 H14" stroke="#333" stroke-width="1.7"/></g><g transform="translate(851,418)" opacity="1"><path d="M3.5 3 H12.5 M2 6.3 H14 M3.5 9.6 H12.5 M2 13 H14" stroke="#333" stroke-width="1.7"/></g><g transform="translate(879,418)" opacity="1"><path d="M4 3 H14 M2 6.3 H14 M5 9.6 H14 M2 13 H14" stroke="#333" stroke-width="1.7"/></g><g transform="translate(907,418)" opacity="1"><path d="M2 3 H14 M2 6.3 H14 M2 9.6 H14 M2 13 H14" stroke="#333" stroke-width="1.7"/></g><g transform="translate(941,418)" opacity="1"><path d="M6 3 H14 M6 5.5 H14 M6 10 H14 M6 12.5 H14" stroke="#333" stroke-width="1"/><path d="M1.5 2.8 L2.8 2 V6.5 M1.2 9.3 H4 V11 H1.4 V13 H4.2" fill="none" stroke="#333" stroke-width="1"/></g><g transform="translate(969,418)" opacity="1"><path d="M6 3 H14 M6 5.5 H14 M6 10 H14 M6 12.5 H14" stroke="#333" stroke-width="1"/><circle cx="2.6" cy="4.2" r="1.9" fill="#333"/><circle cx="2.6" cy="11.3" r="1.9" fill="#333"/></g><text x="1008" y="429" font-size="13" font-weight="bold" text-anchor="middle" fill="#333" font-family="Liberation Sans">A</text><rect x="1001" y="431.5" width="14" height="2" fill="#888"/><path d="M1019 425 h5 l-2.5 3 z" fill="#333"/><rect x="1035" y="419" width="14" height="14" rx="2" fill="#333"/><text x="1042" y="430.5" font-size="12" font-weight="bold" text-anchor="middle" fill="#fff" font-family="Liberation Sans">A</text><path d="M1054 425 h5 l-2.5 3 z" fill="#333"/><g transform="translate(1075,418)" opacity="1"><path d="M3 3.5 V1.5 H13 V3.5" fill="none" stroke="#333" stroke-width="1.4"/><rect x="1" y="4.5" width="14" height="7" rx="1" fill="#333"/><rect x="4" y="8.5" width="8" height="6" fill="#fff" stroke="#333" stroke-width="1.2"/><path d="M5.5 11 H10.5 M5.5 13 H10.5" stroke="#333" stroke-width=".8"/></g><g transform="translate(1103,418)" opacity="1"><path d="M1.5 1.5 H6 L4.5 3 L7 5.5 L5.5 7 L3 4.5 L1.5 6 Z M14.5 1.5 V6 L13 4.5 L10.5 7 L9 5.5 L11.5 3 L10 1.5 Z M1.5 14.5 V10 L3 11.5 L5.5 9 L7 10.5 L4.5 13 L6 14.5 Z M14.5 14.5 H10 L11.5 13 L9 10.5 L10.5 9 L13 11.5 L14.5 10 Z" fill="#333"/></g><text x="645" y="463.2" font-size="12" fill="#484848" font-family="Liberation Sans">Font</text><path d="M679 458.5 h5 l-2.5 3 z" fill="#333"/><text x="706.5" y="463.2" font-size="12" fill="#484848" font-family="Liberation Sans">Size</text><path d="M739 458.5 h5 l-2.5 3 z" fill="#333"/><rect x="693.5" y="450" width="1" height="18" fill="#c8c8c8"/><rect x="753.5" y="450" width="1" height="18" fill="#c8c8c8"/><g transform="translate(763,451)" opacity="1"><rect x="1.6" y="4.4" width="13.4" height="6.8" rx="3.4" fill="none" stroke="#333" stroke-width="1.5"/><path d="M4.6 7.8 H12" stroke="#333" stroke-width="1.4" stroke-linecap="round"/></g><g transform="translate(791,451)" opacity="0.28"><rect x="1.6" y="3.4" width="13.4" height="6.8" rx="3.4" fill="none" stroke="#333" stroke-width="1.5"/><path d="M4.6 6.8 H12" stroke="#333" stroke-width="1.4"/><path d="M10 10 l4.5 4.5 m0 -4.5 l-4.5 4.5" stroke="#333" stroke-width="1.4"/></g><g transform="translate(819,451)" opacity="1"><rect x="1.5" y="2.5" width="13" height="11" fill="none" stroke="#333" stroke-width="1.3"/><path d="M2.5 12.5 L6 8 L8.5 10.5 L10.5 8.5 L13.5 12.5 Z" fill="#333"/><circle cx="5" cy="5.5" r="1.3" fill="#333"/></g><g transform="translate(847,451)" opacity="1"><rect x="1" y="1.5" width="14" height="13" fill="none" stroke="#333" stroke-width="1.4"/><rect x="1" y="1.5" width="14" height="3" fill="#333"/><path d="M1 9.2 H15 M5.7 4 V14.5 M10.3 4 V14.5" stroke="#333" stroke-width="1.2"/></g><text x="883.5" y="465" font-size="17.5" text-anchor="middle" fill="#333" stroke="#333" stroke-width=".45" font-family="Liberation Sans">Ω</text><g transform="translate(904,451)" opacity="1"><path d="M3.5 12 H2 V2.5 H4 M10 2.5 H12 V5" fill="none" stroke="#333" stroke-width="1.2"/><rect x="4.5" y="1" width="5" height="2.6" rx=".6" fill="#333"/><rect x="5" y="5.5" width="9" height="9.5" fill="none" stroke="#333" stroke-width="1.2"/><path d="M7 8.5 L7.8 12.5 L9.5 9.5 L11.2 12.5 L12 8.5" fill="none" stroke="#333" stroke-width="1"/></g><g transform="translate(931,451)" opacity="1"><path d="M3 1.5 H9.5 L13 5 V14.5 H3 Z" fill="none" stroke="#333" stroke-width="1.3"/><path d="M7 7 L5 9.5 L7 12 M9 7 L11 9.5 L9 12" fill="none" stroke="#333" stroke-width="1.1"/></g><path d="M1229 675 v9 h-9 z" fill="#b8b8b8"/></svg>
<div class="a sec" style="left:625px;top:693px;width:610px">Product | Component | Version</div>
<div class="a lbl" style="left:566.5px;top:727px;width:200px">product :</div>
<div class="a in" style="left:772px;top:723px;width:406px;height:21px;line-height:21px">TEST-Produkt<span class="arr" style="width:19px"></span></div>
<svg class="a" style="left:1188px;top:725px" width="16" height="16"><use href="#iSearch"/></svg>
<svg class="a" style="left:1214px;top:726px" width="15" height="13"><use href="#iGoto"/></svg>
<div class="a lbl" style="left:566.5px;top:750px;width:200px">component :</div>
<div class="a in" style="left:772px;top:746px;width:406px;height:21px;line-height:21px"><span class="arr" style="width:19px"></span></div>
<svg class="a" style="left:1188px;top:748px" width="16" height="16"><use href="#iSearch"/></svg>
<svg class="a" style="left:1214px;top:749px" width="15" height="13"><use href="#iGoto"/></svg>
<div class="a lbl" style="left:566.5px;top:773px;width:200px">original product version :</div>
<div class="a in" style="left:772px;top:769px;width:378px;height:21px;line-height:21px"><span class="arr" style="width:19px"></span></div>
<svg class="a" style="left:1162px;top:769px" width="16" height="16"><use href="#iPlus"/></svg>
<svg class="a" style="left:1188px;top:771px" width="16" height="16"><use href="#iSearch"/></svg>
<svg class="a" style="left:1214px;top:772px" width="15" height="13"><use href="#iGoto"/></svg>
<div class="a lbl" style="left:566.5px;top:796px;width:200px">original comp. version :</div>
<div class="a in" style="left:772px;top:792px;width:378px;height:21px;line-height:21px"><span class="arr" style="width:19px"></span></div>
<svg class="a" style="left:1162px;top:792px" width="16" height="16"><use href="#iPlus"/></svg>
<svg class="a" style="left:1188px;top:794px" width="16" height="16"><use href="#iSearch"/></svg>
<svg class="a" style="left:1214px;top:795px" width="15" height="13"><use href="#iGoto"/></svg>
<div class="a lbl" style="left:566.5px;top:819px;width:200px">target product version :</div>
<div class="a in" style="left:772px;top:815px;width:378px;height:21px;line-height:21px">TEST-Produkt_v1.0.0.0<span class="arr" style="width:19px"></span></div>
<svg class="a" style="left:1162px;top:815px" width="16" height="16"><use href="#iPlus"/></svg>
<svg class="a" style="left:1188px;top:817px" width="16" height="16"><use href="#iSearch"/></svg>
<svg class="a" style="left:1214px;top:818px" width="15" height="13"><use href="#iGoto"/></svg>
<div class="a lbl" style="left:566.5px;top:842px;width:200px">target comp. version :</div>
<div class="a in" style="left:772px;top:838px;width:378px;height:21px;line-height:21px"><span class="arr" style="width:19px"></span></div>
<svg class="a" style="left:1162px;top:838px" width="16" height="16"><use href="#iPlus"/></svg>
<svg class="a" style="left:1188px;top:840px" width="16" height="16"><use href="#iSearch"/></svg>
<svg class="a" style="left:1214px;top:841px" width="15" height="13"><use href="#iGoto"/></svg>
<div class="a sec" style="left:1242px;top:63px;width:610px">Linked Elements</div>
<div class="a badge" style="left:1803px;top:66.4px">1</div>
<div class="a th" style="left:1242px;top:92px;width:30px;height:22px;line-height:20.4px"></div>
<div class="a th" style="left:1271px;top:92px;width:97px;height:22px;line-height:20.4px">element</div>
<div class="a th" style="left:1367px;top:92px;width:334px;height:22px;line-height:20.4px">name</div>
<div class="a th" style="left:1700px;top:92px;width:92px;height:22px;line-height:20.4px">status</div>
<div class="a th" style="left:1791px;top:92px;width:61px;height:22px;line-height:20.4px">resp.</div>
<div class="a td" style="left:1242px;top:113px;width:30px;height:28px;line-height:26.4px"></div>
<div class="a td" style="left:1271px;top:113px;width:97px;height:28px;line-height:26.4px"></div>
<div class="a td" style="left:1367px;top:113px;width:334px;height:28px;line-height:26.4px"></div>
<div class="a td" style="left:1700px;top:113px;width:92px;height:28px;line-height:26.4px"></div>
<div class="a td" style="left:1791px;top:113px;width:61px;height:28px;line-height:26.4px"></div>
<svg class="a" style="left:1248.3px;top:94.4px" width="16" height="16"><use href="#iPlus"/></svg>
<svg class="a" style="left:1248.5px;top:116px" width="17" height="16"><use href="#iX"/></svg>
<svg class="a" style="left:1277px;top:115px" width="15" height="15" viewBox="0 0 15 15"><rect x="2.5" y=".8" width="10" height="8.4" rx="1" fill="#e4e8f2" stroke="#6a7080" stroke-width=".8"/><rect x="4.2" y="2.3" width="6.6" height="5" fill="#3050a8"/><rect x="6" y="9.2" width="3" height="1.3" fill="#999"/><path d="M1 14 L2.5 10 H12.5 L14 14 Z" fill="#d8d8d8" stroke="#777" stroke-width=".7"/></svg>
<div class="a" style="left:1296px;top:116px;line-height:16px;font-size:11px;letter-spacing:.25px;color:#222">Activity #101</div>
<div class="a" style="left:1373px;top:114px;line-height:14px;font-size:10.5px;color:#000">Test01_A01</div>
<svg class="a" style="left:1648px;top:115px" width="22" height="23" viewBox="0 0 32 32" preserveAspectRatio="none"><use href="#iCal"/></svg><div class="a" style="left:1648px;top:123px;width:22px;text-align:center;font-size:7.6px;line-height:8px;color:#8a3a3a">26/09</div>
<div class="a dot" style="left:1674px;top:115.5px;width:20.5px;height:20.5px;background:#d95a00;color:#fff;font-size:15.5px;line-height:18.5px;text-align:center">T</div>
<div class="a" style="left:1707px;top:116px;width:78px;height:22px;border-radius:10px;background:#8b4513;color:#fff;font-weight:bold;font-size:10px;line-height:24px;text-align:center;box-shadow:0 0 1px 1px #c9a88f">zugewiesen</div>
<div class="a dot" style="left:1825px;top:116px;width:20px;height:20px;background:#2f8fdd;color:#fff;font-size:15px;line-height:18.6px;text-align:center">T</div>
<div class="a sec" style="left:1242px;top:145px;width:610px">Attachments</div>
<div class="a badge" style="left:1803px;top:148.4px">0</div>
<div class="a th" style="left:1242px;top:174px;width:62px;height:22px;line-height:20.4px"></div>
<div class="a th" style="left:1303px;top:174px;width:32px;height:22px;line-height:20.4px">id</div>
<div class="a th" style="left:1334px;top:174px;width:518px;height:22px;line-height:20.4px">file</div>
<svg class="a" style="left:1253px;top:176.4px" width="16" height="16"><use href="#iPlus"/></svg>
<svg class="a" style="left:1276px;top:177px" width="17" height="17" viewBox="0 0 17 17"><circle cx="8" cy="6.5" r="6" fill="#3f8fd6" stroke="#2a5f9a" stroke-width=".8"/><path d="M4 3 Q7 1.5 8.5 4 Q7 7 4.5 7 Q3 5 4 3 Z M9.5 6 Q12.5 5 13 8 Q11 10.5 9.5 9 Z" fill="#57b54a"/><rect x="2" y="11" width="6" height="4" rx="2" fill="none" stroke="#444" stroke-width="1.3"/><rect x="8" y="11" width="6" height="4" rx="2" fill="none" stroke="#444" stroke-width="1.3"/><path d="M6 13 H10" stroke="#444" stroke-width="1.3"/></svg>
<div class="a sec" style="left:1242px;top:201px;width:610px">Notes</div>
<div class="a badge" style="left:1803px;top:204.4px">0</div>
<div class="a th" style="left:1242px;top:230px;width:62px;height:22px;line-height:20.4px"></div>
<div class="a th" style="left:1303px;top:230px;width:32px;height:22px;line-height:20.4px">id</div>
<div class="a th" style="left:1334px;top:230px;width:518px;height:22px;line-height:20.4px">note</div>
<svg class="a" style="left:1264px;top:232.4px" width="16" height="16"><use href="#iPlus"/></svg>
</body></html>
